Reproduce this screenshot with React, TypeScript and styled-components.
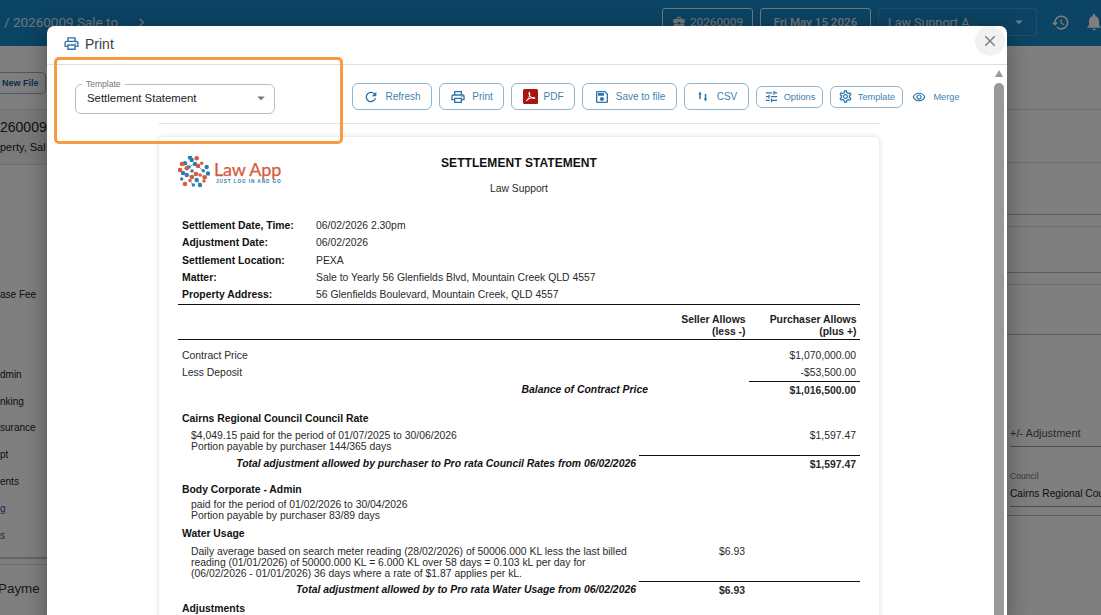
import React from "react";
import styled, { createGlobalStyle } from "styled-components";
import {
  MdRefresh, MdOutlineLocalPrintshop, MdOutlineSave, MdOutlineTune, MdOutlineSettings,
  MdOutlineRemoveRedEye, MdClose, MdHistory, MdNotifications, MdBusinessCenter, MdArrowDropDown, MdChevronRight,
} from "react-icons/md";

const Global = createGlobalStyle`
  html, body { margin: 0; padding: 0; background: #fff; }
  * { box-sizing: border-box; }
  #root { width: 1101px; height: 615px; }
`;

const Screen = styled.div`
  position: relative; width: 1101px; height: 615px; overflow: hidden;
  font-family: Roboto, "Liberation Sans", sans-serif; background: #fff;
`;
const AppPage = styled.div`display: flex; flex-direction: column; height: 100%;`;
const TopBar = styled.header`
  height: 46px; flex: none; background: #1688c9; display: flex; align-items: flex-start;
  padding: 8px 0 0 4px; color: #fff;
`;
const Crumb = styled.div`
  display: flex; align-items: center; font-size: 13.5px; line-height: 28px; color: #dcecf6; flex: 1; white-space: nowrap;
  svg { margin-left: 1px; }
`;
const TopChip = styled.div<{ $w: number; $strong?: boolean }>`
  width: ${p => p.$w}px; height: 28px; margin-right: 7px; border: 1px solid #e6f2f9; border-radius: 3px;
  display: flex; align-items: center; justify-content: center; gap: 4px;
  font-size: ${p => (p.$strong ? 11.6 : 11.8)}px; font-weight: ${p => (p.$strong ? 500 : 400)}; color: #e8f1f7;
`;
const TopSelect = styled.div`
  width: 159px; height: 28px; border: 1px solid #3f9fd6; border-radius: 2px; padding: 0 8px 0 9px;
  display: flex; align-items: center; justify-content: space-between; font-size: 12.5px; color: #e8f1f7;
`;
const TopIcons = styled.div`display: flex; align-items: center; gap: 14px; height: 28px; margin-left: 14px; margin-right: -3px;`;

const Workspace = styled.main`flex: 1; display: flex; justify-content: space-between; min-height: 0;`;
const LeftPanel = styled.aside`width: 47px; overflow: hidden; color: #222; white-space: nowrap;`;
const NewFileZone = styled.div`height: 64px; padding-top: 26px; border-bottom: 1px solid #e0e0e0;`;
const NewFileButton = styled.div`
  width: 46px; height: 22px; border: 1px solid #8fb4cf; border-left: 0; border-radius: 0 5px 5px 0;
  display: flex; align-items: center; padding-left: 2px;
  font: bold 9px "Liberation Sans", sans-serif; color: #1a5d95;
`;
const MatterZone = styled.div`
  height: 55px; padding-top: 6px; background: #f5f5f5; border-bottom: 1px solid #dedede;
`;
const MatterNumber = styled.div`font: 14px/22px "Liberation Sans", sans-serif; color: #222;`;
const MatterLine = styled.div`font: 11px/18px "Liberation Sans", sans-serif; color: #222;`;
const FeeList = styled.div`height: 394px; padding-top: 122px; font-family: "Liberation Sans", sans-serif; border-bottom: 2px solid #c8c8c8;`;
const FeeRow = styled.div<{ $c?: string; $gap?: number }>`
  height: 26.8px; line-height: 15px; margin-top: ${p => p.$gap || 0}px; color: ${p => p.$c || "#222"};
  font-size: 10px;
`;
const PayHeading = styled.div`
  height: 50px; margin-top: 5px; border-top: 1px solid #dcdcdc; padding-top: 12px; margin-left: -2px;
  font: 13.4px/24px "Liberation Sans", sans-serif; color: #333;
`;

const RightPanel = styled.aside`width: 94px; overflow: hidden; white-space: nowrap; font-family: "Liberation Sans", sans-serif;`;
const Band = styled.div<{ $h: number; $dark?: boolean }>`
  height: ${p => p.$h}px; border-bottom: 1px solid ${p => (p.$dark ? "#b9b9b9" : "#dcdcdc")};
`;
const FormBlock = styled.div`padding: 90px 0 0 3px;`;
const FieldTitle = styled.div`font-size: 11px; line-height: 16px; color: #555; height: 22px; border-bottom: 1px solid #999; `;
const FieldLabel = styled.div`font-size: 8.6px; line-height: 12px; color: #777; margin-top: 23px;`;
const FieldValue = styled.div`font-size: 10.2px; line-height: 12px; color: #222; margin-top: 6px; height: 19px; border-bottom: 1px solid #999;`;
const FieldEnd = styled.div`margin: 8px 0 0 -3px; border-top: 1px solid #bbb;`;

const Scrim = styled.div`position: absolute; inset: 0; background: rgba(0, 0, 0, 0.5);`;

const Modal = styled.section`
  position: absolute; left: 47px; top: 26px; width: 960px; height: 600px; background: #fff;
  border-radius: 7px 7px 0 0; box-shadow: 0 4px 24px rgba(0,0,0,.35); overflow: hidden;
  display: flex; flex-direction: column;
`;
const ModalTitle = styled.div`
  height: 39px; flex: none; border-bottom: 1px solid #dfdfdf; display: flex; align-items: center; gap: 5px;
  padding: 0 0 3px 16px; font: 14px "Liberation Sans", sans-serif; color: #3c3c3c;
`;
const CloseButton = styled.div`
  position: absolute; right: 2px; top: 0; width: 30px; height: 30px; border-radius: 50%; background: #f1f1f1;
  display: flex; align-items: center; justify-content: center; color: #808080;
`;
const ModalBody = styled.div`flex: 1; display: flex; min-height: 0;`;
const ScrollArea = styled.div`flex: 1; min-width: 0; overflow: hidden;`;
const ControlRow = styled.div`display: flex; height: 58px;`;
const SelectSlot = styled.div`width: 305px; padding: 19px 0 0 28px; flex: none;`;
const OutlinedSelect = styled.div`
  position: relative; width: 200px; height: 30px; border: 1px solid #bdbdbd; border-radius: 6px;
  display: flex; align-items: center; justify-content: space-between; padding: 0 4px 2px 11px;
  font: 11.4px "Liberation Sans", sans-serif; color: #222;
`;
const FloatLabel = styled.span`
  position: absolute; left: 6px; top: -6px; padding: 0 4px; background: #fff;
  font: 8.5px/10px "Liberation Sans", sans-serif; color: #757575;
`;
const Toolbar = styled.div`display: flex; align-items: center; gap: 7px; height: 27px; margin-top: 18px;`;
const ToolButton = styled.div<{ $w: number; $small?: boolean; $plain?: boolean }>`
  width: ${p => p.$w}px; height: ${p => (p.$small ? 22 : 27)}px; flex: none;
  border: ${p => (p.$plain ? "0" : "1px solid #93b6ce")}; border-radius: 6px;
  display: flex; align-items: center; justify-content: center; gap: ${p => (p.$plain ? 7 : p.$small ? 5 : 6)}px;
  font: ${p => (p.$small ? 9.2 : 10)}px "Liberation Sans", sans-serif; color: #3f7fae; white-space: nowrap;
  svg { color: #2f75ab; flex: none; }
`;
const Highlight = styled.div`
  position: absolute; left: 7px; top: 31px; width: 289px; height: 87px;
  border: 3.5px solid #f79b42; border-radius: 5px; pointer-events: none;
`;
const DocArea = styled.div`
  margin-left: 112px; width: 721px; border-top: 1px solid #e2e2e2; padding-top: 13px;
`;
const Sheet = styled.article`
  width: 720px; height: 600px; padding: 0 19px; border-radius: 4px 4px 0 0; background: #fff;
  box-shadow: 0 0 5px rgba(0,0,0,.16);
  font: 10.4px "Liberation Sans", sans-serif; color: #2a2a2a;
`;
const Letterhead = styled.div`display: grid; grid-template-columns: 1fr auto 1fr; padding-top: 18px;`;
const Logo = styled.div`display: flex; align-items: flex-start; gap: 4px; margin-top: 1px;`;
const LogoWords = styled.div`display: flex; flex-direction: column; align-items: flex-start;`;
const LogoName = styled.span`font: 18px/19px Lato, "Liberation Sans", sans-serif; color: #d65a3c; margin-top: 4px; letter-spacing: -.15px; -webkit-text-stroke: .25px #d65a3c;`;
const LogoTag = styled.span`font: bold 4.7px/5px "Liberation Sans", sans-serif; color: #2b78ad; letter-spacing: .9px; margin-left: 2px;`;
const TitleStack = styled.div`text-align: center;`;
const DocTitle = styled.h1`margin: 0; font: bold 12px/16px "Liberation Sans", sans-serif; color: #111; letter-spacing: .05px;`;
const DocSub = styled.div`margin-top: 12px; line-height: 12px; font-size: 10.3px;`;
const InfoTable = styled.div`margin-top: 22px; padding-bottom: 1px; border-bottom: 1px solid #111;`;
const InfoRow = styled.div`display: grid; grid-template-columns: 134px 1fr; height: 17.3px; line-height: 17px; padding-left: 4px;`;
const InfoKey = styled.span`font-weight: 700; color: #111;`;
const AmountHeader = styled.div`
  display: grid; grid-template-columns: 461px 110px 111px; padding: 9px 0 1px; line-height: 12px;
  font-weight: 700; text-align: right; border-bottom: 1px solid #111; color: #222;
`;
const HeaderCell = styled.div`padding-right: 3.5px;`;
const Line = styled.div<{ $wide?: boolean; $top?: number; $tall?: boolean }>`
  display: grid; grid-template-columns: ${p => (p.$wide ? "473px 98px 111px" : "461px 110px 111px")};
  margin-top: ${p => p.$top || 0}px; line-height: ${p => (p.$tall ? 18 : 17)}px; min-height: 17px;
`;
const Desc = styled.div`padding-left: 4px;`;
const Money = styled.div<{ $bold?: boolean; $rule?: boolean }>`
  text-align: right; padding-right: 4px; font-weight: ${p => (p.$bold ? 700 : 400)};
  border-top: ${p => (p.$rule ? "1px solid #111" : "0")};
`;
const TotalLabel = styled.div`text-align: right; padding-right: 3px; font-weight: 700; font-style: italic; color: #111;`;
const SectionHead = styled.div<{ $top: number }>`
  margin-top: ${p => p.$top}px; line-height: 16px; padding-left: 4px; font-weight: 700; color: #111;
`;
const Detail = styled.div<{ $top: number }>`
  display: grid; grid-template-columns: 461px 110px 111px; margin-top: ${p => p.$top}px; line-height: 11px;
`;
const DetailText = styled.div`padding-left: 13px; white-space: nowrap;`;

const ScrollRail = styled.div`width: 13px; flex: none; position: relative; padding-top: 18px; margin-right: 0;`;
const ScrollThumb = styled.div`width: 10px; height: 600px; border-radius: 5px 5px 0 0; background: #999;`;
const ScrollUp = styled.div`
  position: absolute; top: 5px; left: 1px; width: 0; height: 0;
  border-left: 4px solid transparent; border-right: 4px solid transparent; border-bottom: 7px solid #999;
`;

const blue: number[][] = [[13.7,4],[7,7.3],[25.3,14.7],[28.7,11],[8.7,19],[3.7,23],[18.7,24],[22,29],[15.3,29],[12,1.5],[17,8],[11,11],[30,17.5],[5,17],[14,15]];
const red: number[][] = [[18.7,2.3],[23.7,7.3],[8.7,12.3],[2,14],[22,19],[26.7,21.3],[7,28],[12,24.5],[20,10],[14,21],[26,25],[4,8],[18,18]];

const LogoMark = () => (
  <svg width="32" height="32" viewBox="0 0 32 32">
    <path d="M11 11l5-3M20 10l3-3M9 19l5 2M22 19l4 2M12 25l3 4M7 7l4 4M25 15l-5-5M19 24l3 5" stroke="#5a86a5" strokeWidth=".8" />
    {blue.map(([x, y], i) => <circle key={i} cx={x} cy={y} r={i % 3 === 2 ? 1.7 : 2.2} fill="#2c7db3" />)}
    {red.map(([x, y], i) => <circle key={i} cx={x} cy={y} r={i % 3 === 1 ? 1.7 : 2.3} fill="#d85a3e" />)}
  </svg>
);
const PdfIcon = () => (
  <svg width="15" height="15" viewBox="0 0 15 15">
    <rect width="15" height="15" rx="1.5" fill="#a81510" />
    <path d="M3 12c2.400-1.500 4-5.200 3.800-8-.1-1.300-1.300-.9-.9.6.7 2.700 2.700 4.800 5.300 4.900 1.400 0 1.200-1.100-.3-1-2.400.2-5 1-7.400 3z" fill="none" stroke="#fff" strokeWidth="1" />
  </svg>
);
const CsvIcon = () => (
  <svg width="15" height="15" viewBox="0 0 15 15" fill="none" stroke="#2f75ab" strokeWidth="1.5">
    <path d="M4 4.500V10M9.500 5v5" />
    <path d="M7.800 9.500h3.400L9.500 12.500z" fill="#2f75ab" stroke="none" />
    <path d="M2.300 5.500h3.400L4 2.500z" fill="#2f75ab" stroke="none" />
  </svg>
);

export default function App() {
  return (
    <Screen>
      <Global />
      <AppPage>
        <TopBar>
          <Crumb>/ 20260009 Sale to ...<MdChevronRight size={17} /></Crumb>
          <TopChip $w={91}><MdBusinessCenter size={14} /> 20260009</TopChip>
          <TopChip $w={111} $strong>Fri May 15 2026</TopChip>
          <TopSelect>Law Support A... <MdArrowDropDown size={18} /></TopSelect>
          <TopIcons><MdHistory size={19} /><MdNotifications size={20} /></TopIcons>
        </TopBar>
        <Workspace>
          <LeftPanel>
            <NewFileZone><NewFileButton>New File</NewFileButton></NewFileZone>
            <MatterZone>
              <MatterNumber>260009</MatterNumber>
              <MatterLine>perty, Sal</MatterLine>
            </MatterZone>
            <FeeList>
              <FeeRow>ase Fee</FeeRow>
              <FeeRow $gap={53}>dmin</FeeRow>
              <FeeRow>nking</FeeRow>
              <FeeRow>surance</FeeRow>
              <FeeRow>pt</FeeRow>
              <FeeRow>ents</FeeRow>
              <FeeRow $c="#1a5d95">g</FeeRow>
              <FeeRow $c="#1f6b3a">s</FeeRow>
            </FeeList>
            <PayHeading>Payme</PayHeading>
          </LeftPanel>
          <RightPanel>
            <Band $h={64} />
            <Band $h={53} />
            <Band $h={52} $dark />
            <Band $h={12} />
            <Band $h={46} $dark />
            <Band $h={12} />
            <Band $h={50} $dark />
            <FormBlock>
              <FieldTitle>+/- Adjustment</FieldTitle>
              <FieldLabel>Council</FieldLabel>
              <FieldValue>Cairns Regional Cou</FieldValue>
              <FieldEnd />
            </FormBlock>
          </RightPanel>
        </Workspace>
      </AppPage>
      <Scrim />
      <Modal>
        <ModalTitle><MdOutlineLocalPrintshop size={17} color="#2f75ab" /> Print</ModalTitle>
        <CloseButton><MdClose size={18} /></CloseButton>
        <ModalBody>
          <ScrollArea>
            <ControlRow>
              <SelectSlot>
                <OutlinedSelect>
                  <FloatLabel>Template</FloatLabel>
                  Settlement Statement
                  <MdArrowDropDown size={18} color="#777" />
                </OutlinedSelect>
              </SelectSlot>
              <Toolbar>
                <ToolButton $w={80}><MdRefresh size={16} /> Refresh</ToolButton>
                <ToolButton $w={65}><MdOutlineLocalPrintshop size={16} /> Print</ToolButton>
                <ToolButton $w={64}><PdfIcon /> PDF</ToolButton>
                <ToolButton $w={95}><MdOutlineSave size={16} /> Save to file</ToolButton>
                <ToolButton $w={65}><CsvIcon /> CSV</ToolButton>
                <ToolButton $w={67} $small><MdOutlineTune size={15} /> Options</ToolButton>
                <ToolButton $w={73} $small><MdOutlineSettings size={15} /> Template</ToolButton>
                <ToolButton $w={52} $small $plain><MdOutlineRemoveRedEye size={14} /> Merge</ToolButton>
              </Toolbar>
            </ControlRow>
            <DocArea>
              <Sheet>
                <Letterhead>
                  <Logo>
                    <LogoMark />
                    <LogoWords>
                      <LogoName>Law App</LogoName>
                      <LogoTag>JUST LOG IN AND GO</LogoTag>
                    </LogoWords>
                  </Logo>
                  <TitleStack>
                    <DocTitle>SETTLEMENT STATEMENT</DocTitle>
                    <DocSub>Law Support</DocSub>
                  </TitleStack>
                </Letterhead>
                <InfoTable>
                  <InfoRow><InfoKey>Settlement Date, Time:</InfoKey><span>06/02/2026 2.30pm</span></InfoRow>
                  <InfoRow><InfoKey>Adjustment Date:</InfoKey><span>06/02/2026</span></InfoRow>
                  <InfoRow><InfoKey>Settlement Location:</InfoKey><span>PEXA</span></InfoRow>
                  <InfoRow><InfoKey>Matter:</InfoKey><span>Sale to Yearly 56 Glenfields Blvd, Mountain Creek QLD 4557</span></InfoRow>
                  <InfoRow><InfoKey>Property Address:</InfoKey><span>56 Glenfields Boulevard, Mountain Creek, QLD 4557</span></InfoRow>
                </InfoTable>
                <AmountHeader>
                  <div />
                  <HeaderCell>Seller Allows<br />(less -)</HeaderCell>
                  <HeaderCell>Purchaser Allows<br />(plus +)</HeaderCell>
                </AmountHeader>
                <Line $top={7}><Desc>Contract Price</Desc><div /><Money>$1,070,000.00</Money></Line>
                <Line><Desc>Less Deposit</Desc><div /><Money>-$53,500.00</Money></Line>
                <Line $wide $tall><TotalLabel>Balance of Contract Price</TotalLabel><div /><Money $bold $rule>$1,016,500.00</Money></Line>
                <SectionHead $top={11}>Cairns Regional Council Council Rate</SectionHead>
                <Detail $top={3}>
                  <DetailText>$4,049.15 paid for the period of 01/07/2025 to 30/06/2026<br />Portion payable by purchaser 144/365 days</DetailText>
                  <div />
                  <Money>$1,597.47</Money>
                </Detail>
                <Line $top={3}><TotalLabel>Total adjustment allowed by purchaser to Pro rata Council Rates from 06/02/2026</TotalLabel><Money $rule /><Money $bold $rule>$1,597.47</Money></Line>
                <SectionHead $top={9}>Body Corporate - Admin</SectionHead>
                <Detail $top={1}>
                  <DetailText>paid for the period of 01/02/2026 to 30/04/2026<br />Portion payable by purchaser 83/89 days</DetailText>
                </Detail>
                <SectionHead $top={5}>Water Usage</SectionHead>
                <Detail $top={4}>
                  <DetailText>Daily average based on search meter reading (28/02/2026) of 50006.000 KL less the last billed<br />reading (01/01/2026) of 50000.000 KL = 6.000 KL over 58 days = 0.103 kL per day for<br />(06/02/2026 - 01/01/2026) 36 days where a rate of $1.87 applies per kL.</DetailText>
                  <Money>$6.93</Money>
                </Detail>
                <Line $top={2} $tall><TotalLabel>Total adjustment allowed by to Pro rata Water Usage from 06/02/2026</TotalLabel><Money $bold $rule>$6.93</Money><Money $rule /></Line>
                <SectionHead $top={1}>Adjustments</SectionHead>
              </Sheet>
            </DocArea>
          </ScrollArea>
          <ScrollRail><ScrollUp /><ScrollThumb /></ScrollRail>
        </ModalBody>
        <Highlight />
      </Modal>
    </Screen>
  );
}
